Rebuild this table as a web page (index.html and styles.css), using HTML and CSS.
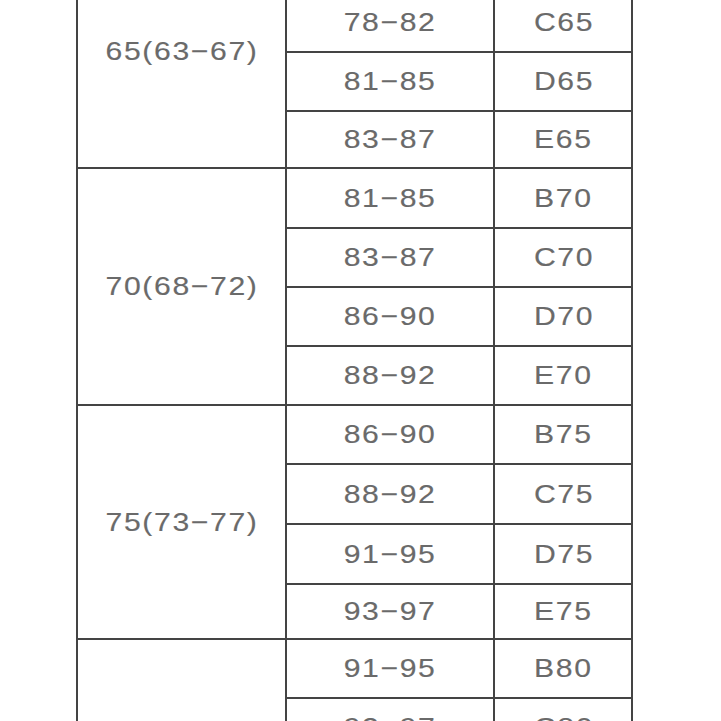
FILE: index.html
```html
<!DOCTYPE html>
<html>
<head>
<meta charset="utf-8">
<link rel="stylesheet" href="styles.css">
</head>
<body>
<div class="size-table">
  <div class="cell group"><span class="txt">65(63−67)</span></div>
  <div class="cell"><span class="txt">76−80</span></div><div class="cell"><span class="txt">B65</span></div>
  <div class="cell"><span class="txt">78−82</span></div><div class="cell"><span class="txt">C65</span></div>
  <div class="cell"><span class="txt">81−85</span></div><div class="cell"><span class="txt">D65</span></div>
  <div class="cell"><span class="txt">83−87</span></div><div class="cell"><span class="txt">E65</span></div>

  <div class="cell group"><span class="txt">70(68−72)</span></div>
  <div class="cell"><span class="txt">81−85</span></div><div class="cell"><span class="txt">B70</span></div>
  <div class="cell"><span class="txt">83−87</span></div><div class="cell"><span class="txt">C70</span></div>
  <div class="cell"><span class="txt">86−90</span></div><div class="cell"><span class="txt">D70</span></div>
  <div class="cell"><span class="txt">88−92</span></div><div class="cell"><span class="txt">E70</span></div>

  <div class="cell group"><span class="txt">75(73−77)</span></div>
  <div class="cell"><span class="txt">86−90</span></div><div class="cell"><span class="txt">B75</span></div>
  <div class="cell"><span class="txt">88−92</span></div><div class="cell"><span class="txt">C75</span></div>
  <div class="cell"><span class="txt">91−95</span></div><div class="cell"><span class="txt">D75</span></div>
  <div class="cell"><span class="txt">93−97</span></div><div class="cell"><span class="txt">E75</span></div>

  <div class="cell group"><span class="txt">80(78−82)</span></div>
  <div class="cell"><span class="txt">91−95</span></div><div class="cell"><span class="txt">B80</span></div>
  <div class="cell"><span class="txt">93−97</span></div><div class="cell"><span class="txt">C80</span></div>
  <div class="cell"><span class="txt">96−100</span></div><div class="cell"><span class="txt">D80</span></div>
  <div class="cell"><span class="txt">98−102</span></div><div class="cell"><span class="txt">E80</span></div>
</div>
</body>
</html>
```

FILE: styles.css
```css
html, body {
  margin: 0;
  padding: 0;
  background: #ffffff;
  overflow: hidden;
}

body {
  width: 721px;
  height: 721px;
}

.size-table {
  display: grid;
  width: max-content;
  margin: -67px 0 0 76px;
  padding: 2px;
  gap: 2px;
  background: #444444;
  grid-template-columns: 207px 206px 136px;
  grid-template-rows: 57px 57px 57px 55px 58px 57px 57px 57px 57px 58px 58px 53px 57px 57px 57px 57px;
}

.cell {
  background: #ffffff;
  display: flex;
  align-items: center;
  justify-content: center;
  font-family: "Liberation Sans", Arial, sans-serif;
  font-size: 26px;
  letter-spacing: 1.4px;
  color: #6a6a6a;
}

.txt {
  display: inline-block;
  transform: scaleX(1.16);
  -webkit-text-stroke: 0.15px #6a6a6a;
  padding-left: 1px;
}

.group {
  grid-row: span 4;
}
```
